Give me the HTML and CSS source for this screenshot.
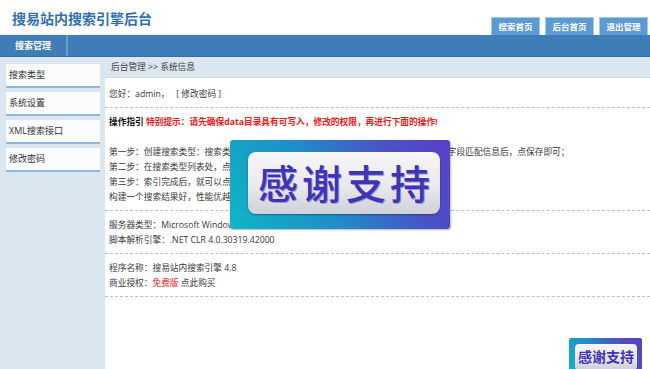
FILE: index.html
```html
<!DOCTYPE html>
<html lang="zh-CN">
<head>
    <meta charset="UTF-8">
    <meta name="viewport" content="width=device-width, initial-scale=1.0">
    <title>搜易站内搜索引擎后台</title>
    <link rel="stylesheet" href="styles.css">
</head>
<body>
    <div class="header">
        <h1 class="logo">搜易站内搜索引擎后台</h1>
        <div class="top-links">
            <a href="#" class="tab">搜索首页</a>
            <a href="#" class="tab">后台首页</a>
            <a href="#" class="tab">退出管理</a>
        </div>
    </div>
    <div class="navbar">
        <a href="#" class="nav-item">搜索管理</a>
    </div>
    <div class="main">
        <div class="sidebar">
            <a href="#" class="side-item">搜索类型</a>
            <a href="#" class="side-item">系统设置</a>
            <a href="#" class="side-item">XML搜索接口</a>
            <a href="#" class="side-item">修改密码</a>
        </div>
        <div class="content">
            <div class="crumb">后台管理 &gt;&gt; 系统信息</div>
            <div class="panel">
                <div class="section first">
                    <p>您好：admin，&nbsp;&nbsp;&nbsp;[ 修改密码 ]</p>
                </div>
                <div class="section">
                    <p><strong>操作指引</strong> <strong class="red">特别提示：请先确保data目录具有可写入，修改的权限，再进行下面的操作!</strong></p>
                    <p>&nbsp;</p>
                    <p>第一步：创建搜索类型：搜索类型即需要搜索的数据表，填写数据库连接信息和数据表的字段匹配信息后，点保存即可；</p>
                    <p>第二步：在搜索类型列表处，点击“创建索引”按钮，对数据进行索引；</p>
                    <p>第三步：索引完成后，就可以点击“搜索首页”进行搜索了。</p>
                    <p>构建一个搜索结果好，性能优越的站内搜索引擎。</p>
                </div>
                <div class="section">
                    <p>服务器类型：Microsoft Windows NT 6.2.9200.0</p>
                    <p>脚本解析引擎：.NET CLR 4.0.30319.42000</p>
                </div>
                <div class="section">
                    <p>程序名称：搜易站内搜索引擎 4.8</p>
                    <p>商业授权：<span class="red">免费版</span> 点此购买</p>
                </div>
            </div>
        </div>
    </div>

    <!-- popup ad over the page -->
    <div class="badge">
        <div class="badge-inner">感谢支持</div>
    </div>
    <div class="badge-mini">
        <div class="badge-mini-inner">感谢支持</div>
    </div>
</body>
</html>
```

FILE: styles.css
```css
body {
    margin: 0;
    background-color: #dbe7f0;
    font-family: "Open Sans", "Noto Sans CJK SC", sans-serif;
    color: #333;
}
a {
    text-decoration: none;
}
.header {
    height: 35px;
    background: white;
    display: flex;
    justify-content: space-between;
    align-items: flex-end;
}
.logo {
    margin: 0;
    padding-left: 12px;
    align-self: center;
    line-height: 36px;
    font-size: 14px;
    font-weight: bold;
    color: #2f6fb2;
    font-family: "Noto Sans CJK SC", sans-serif;
}
.top-links {
    display: flex;
    gap: 5px;
    padding-right: 2px;
}
.tab {
    width: 49px;
    height: 18px;
    box-sizing: border-box;
    background-color: #5b9ad5;
    border: 1px solid #a6c9e9;
    border-bottom: none;
    color: white;
    font-size: 8.5px;
    font-weight: bold;
    line-height: 17px;
    text-align: center;
}
.navbar {
    height: 22px;
    background-color: #3e7db7;
    border-bottom: 1px solid #3770a6;
    box-sizing: border-box;
    display: flex;
}
.nav-item {
    width: 66px;
    border-right: 2px solid #6c9dcc;
    color: white;
    font-size: 9px;
    font-weight: bold;
    line-height: 21px;
    text-align: center;
}
.main {
    display: flex;
    min-height: calc(100vh - 57px);
}
.sidebar {
    width: 94px;
    padding: 7px 0 0 6px;
    display: flex;
    flex-direction: column;
    gap: 4px;
}
.side-item {
    height: 22px;
    background: #fbfcfd;
    border-bottom: 2px solid #8db7dd;
    color: #333;
    font-size: 9px;
    line-height: 22px;
    padding-left: 3px;
}
.content {
    flex: 1;
    margin-left: 5px;
    display: flex;
    flex-direction: column;
}
.crumb {
    height: 20px;
    line-height: 20px;
    padding-left: 6px;
    font-size: 8.7px;
    color: #444;
}
.panel {
    flex: 1;
    background: white;
    border-top: 1px solid #c9d9e6;
}
.section {
    padding: 7px 4px 5px;
    border-bottom: 1px dashed #aec3d6;
}
.section.first {
    padding-top: 9px;
}
.section p {
    margin: 0;
    font-size: 8.7px;
    line-height: 15px;
    white-space: nowrap;
    color: #3a3a3a;
}
.section strong {
    color: #111;
}
.red {
    color: #f01818;
}
.section strong.red {
    color: #f01818;
}
.badge {
    position: absolute;
    left: 230px;
    top: 140px;
    width: 220px;
    height: 89px;
    border-radius: 3px;
    background: linear-gradient(60deg, #0fb6c4 0%, #1f8fc8 40%, #4a52c6 75%, #5b3fc9 100%);
    box-shadow: 1px 1px 2px rgba(0, 0, 0, 0.3);
    box-sizing: border-box;
    padding: 12px 0 0 18px;
}
.badge-inner {
    width: 192px;
    height: 62px;
    border-radius: 8px;
    background: linear-gradient(180deg, #f7f7f9 0%, #e9e9ee 55%, #cfd0d8 100%);
    box-shadow: 0 1px 2px rgba(0, 0, 0, 0.35);
    color: #3f33b6;
    font-family: "Noto Sans CJK SC", sans-serif;
    font-weight: 500;
    font-size: 40px;
    letter-spacing: 4px;
    line-height: 60px;
    text-align: center;
    text-indent: 4px;
    text-shadow: 1px 1px 0 #9b96d8;
}
.badge-mini {
    position: fixed;
    right: 8px;
    bottom: -9px;
    width: 73px;
    height: 40px;
    border-radius: 2px;
    background: linear-gradient(60deg, #0fb6c4 0%, #1f8fc8 40%, #4a52c6 75%, #5b3fc9 100%);
    box-sizing: border-box;
    padding: 6px 0 0 6px;
}
.badge-mini-inner {
    width: 62px;
    height: 26px;
    border-radius: 4px;
    background: linear-gradient(180deg, #f7f7f9 0%, #e4e4ea 60%, #cfd0d8 100%);
    color: #3f33b6;
    font-family: "Noto Sans CJK SC", sans-serif;
    font-weight: bold;
    font-size: 14px;
    line-height: 24px;
    text-align: center;
}
```
